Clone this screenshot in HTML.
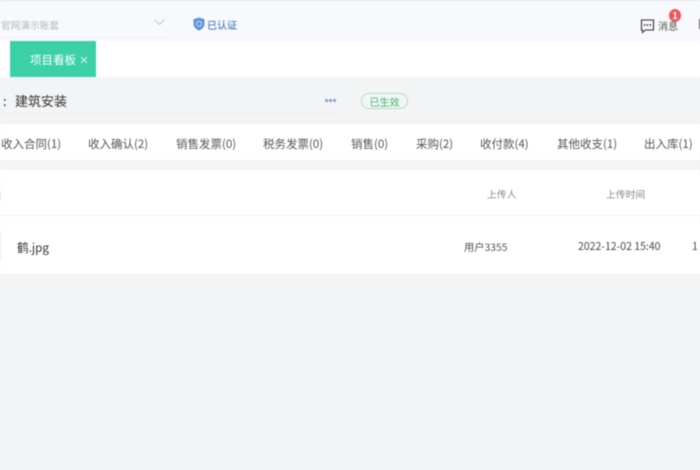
<!DOCTYPE html>
<html lang="zh-CN">
<head>
<meta charset="utf-8">
<title>项目看板</title>
<style>
html,body{margin:0;padding:0}
body{width:700px;height:470px;overflow:hidden;background:#f3f4f5;position:relative;font-family:"Noto Sans CJK SC","Liberation Sans",sans-serif;color:#444}
#w{position:absolute;inset:0;overflow:hidden;filter:blur(.4px)}
.a{position:absolute;white-space:nowrap}
.t{position:absolute;top:136px;font-size:11.5px;line-height:16px;color:#555;white-space:nowrap}
</style>
</head>
<body>
<div id="w">
<div class="a" style="left:0;top:0;width:700px;height:41px;background:#f8f9fc;border-top:1px solid #e6e8ee;box-sizing:border-box"></div>
<div class="a" style="left:0;top:37px;width:168px;height:1px;background:#eff0f3"></div>
<div class="a" style="left:1px;top:18px;font-size:9.7px;line-height:14px;color:#b5b7bb">官网演示账套</div>
<svg class="a" style="left:153px;top:18px" width="13" height="9" viewBox="0 0 13 9"><path d="M1.5 1.5L6.500 6.500L11.500 1.500" fill="none" stroke="#c4c7cc" stroke-width="1"/></svg>
<svg class="a" style="left:193px;top:17px" width="12" height="14" viewBox="0 0 12 14"><path d="M6 .5L11.500 2.200V7C11.500 10 9 12.300 6 13.500C3 12.300 .5 10 .5 7V2.200Z" fill="#5b94d8"/><circle cx="6" cy="6.800" r="2.500" fill="none" stroke="#cfe0f5" stroke-width="1"/></svg>
<div class="a" style="left:207px;top:17px;font-size:10px;line-height:15px;font-weight:700;color:#6a94cc">已认证</div>

<svg class="a" style="left:640px;top:19px" width="15" height="15" viewBox="0 0 15 15"><path d="M1.500 1H13.500V11H5.500L2.500 13.500V11H1.500Z" fill="none" stroke="#333" stroke-width="1.100"/><circle cx="4.700" cy="6" r=".9" fill="#333"/><circle cx="7.500" cy="6" r=".9" fill="#333"/><circle cx="10.300" cy="6" r=".9" fill="#333"/></svg>
<div class="a" style="left:658px;top:19px;font-size:10px;line-height:14px;color:#555">消息</div>
<div class="a" style="left:669px;top:9px;width:12px;height:13px;border-radius:50%;background:#f0565c;color:#fff;font-size:9px;line-height:13px;font-weight:700;text-align:center">1</div>
<div class="a" style="left:699px;top:19px;width:1px;height:10px;background:#555"></div>

<div class="a" style="left:0;top:41px;width:700px;height:36px;background:#fff"></div>
<div class="a" style="left:10px;top:41px;width:86px;height:36px;background:#3bd0a5"></div>
<div class="a" style="left:30px;top:52px;font-size:11.5px;line-height:16px;color:#fff">项目看板</div>
<svg class="a" style="left:80px;top:56px" width="8" height="8" viewBox="0 0 8 8"><path d="M1 1L7 7M7 1L1 7" stroke="#e8faf5" stroke-width=".9" fill="none"/></svg>

<div class="a" style="left:3px;top:92px;font-size:13px;line-height:18px;color:#333">:</div>
<div class="a" style="left:15px;top:92px;font-size:13px;line-height:18px;color:#333">建筑安装</div>
<div class="a" style="left:0;top:113px;width:340px;height:1px;background:#ebecef"></div>
<div class="a" style="left:325px;top:99px;width:2.500px;height:2.500px;border-radius:50%;background:#7f9fd6;box-shadow:4px 0 0 #7f9fd6,8px 0 0 #7f9fd6"></div>
<div class="a" style="left:361px;top:93px;width:47px;height:16px;box-sizing:border-box;border:1px solid #b5dcc2;border-radius:8px;background:#f0f7f2;text-align:center;font-size:10px;line-height:15px;color:#4cad70">已生效</div>

<div class="a" style="left:0;top:124px;width:700px;height:36px;background:#fff"></div>
<div class="t" style="left:1px">收入合同(1)</div>
<div class="t" style="left:88px">收入确认(2)</div>
<div class="t" style="left:176px">销售发票(0)</div>
<div class="t" style="left:263px">税务发票(0)</div>
<div class="t" style="left:351px">销售(0)</div>
<div class="t" style="left:416px">采购(2)</div>
<div class="t" style="left:480px">收付款(4)</div>
<div class="t" style="left:557px">其他收支(1)</div>
<div class="t" style="left:644px">出入库(1)</div>

<div class="a" style="left:0;top:170px;width:700px;height:104px;background:#fff"></div>
<div class="a" style="left:0;top:215px;width:700px;height:1px;background:#eeeff1"></div>
<div class="a" style="left:0;top:192px;width:1px;height:7px;background:#e4e5e7"></div>
<div class="a" style="left:0;top:234px;width:1px;height:26px;background:#eeeff0"></div>
<div class="a" style="left:487px;top:187px;font-size:9.8px;line-height:14px;color:#888">上传人</div>
<div class="a" style="left:606px;top:187px;font-size:9.8px;line-height:14px;color:#888">上传时间</div>
<div class="a" style="left:17px;top:240px;font-size:11.7px;line-height:16px;color:#333">鹤.jpg</div>
<div class="a" style="left:464px;top:240px;font-size:10.3px;line-height:14px;color:#555">用户3355</div>
<div class="a" style="left:578px;top:240px;font-size:10.5px;line-height:14px;color:#444">2022-12-02 15:40</div>
<div class="a" style="left:692px;top:240px;font-size:10.5px;line-height:14px;color:#444">1</div>
</div>
</body>
</html>
